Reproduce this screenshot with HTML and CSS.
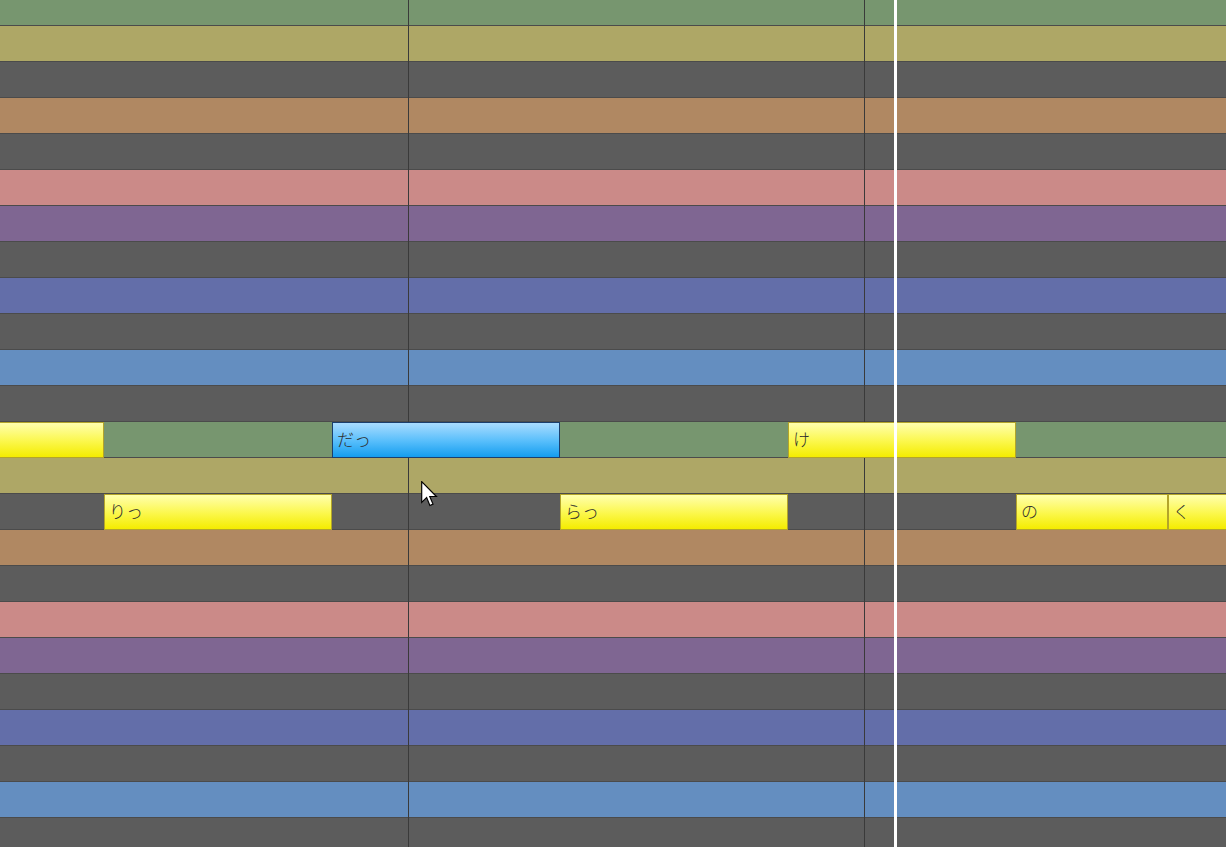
FILE: index.html
```html
<!DOCTYPE html>
<html lang="ja">
<head>
<meta charset="utf-8">
<title>Piano roll</title>
<link rel="stylesheet" href="styles.css">
</head>
<body>
<div class="roll">
  <div class="rows">
    <div class="row c-green"></div>
    <div class="row c-olive"></div>
    <div class="row c-gray"></div>
    <div class="row c-brown"></div>
    <div class="row c-gray"></div>
    <div class="row c-pink"></div>
    <div class="row c-purple"></div>
    <div class="row c-gray"></div>
    <div class="row c-blue"></div>
    <div class="row c-gray"></div>
    <div class="row c-sky"></div>
    <div class="row c-gray"></div>
    <div class="row c-green"></div>
    <div class="row c-olive"></div>
    <div class="row c-gray"></div>
    <div class="row c-brown"></div>
    <div class="row c-gray"></div>
    <div class="row c-pink"></div>
    <div class="row c-purple"></div>
    <div class="row c-gray"></div>
    <div class="row c-blue"></div>
    <div class="row c-gray"></div>
    <div class="row c-sky"></div>
    <div class="row c-gray"></div>
  </div>

  <div class="vline" style="left:408px"></div>
  <div class="vline" style="left:864px"></div>

  <div class="note" style="left:-124px; top:422px; width:228px"></div>
  <div class="note" style="left:104px; top:494px; width:228px">りっ</div>
  <div class="note selected" style="left:332px; top:422px; width:228px">だっ</div>
  <div class="note" style="left:560px; top:494px; width:228px">らっ</div>
  <div class="note" style="left:788px; top:422px; width:228px">け</div>
  <div class="note" style="left:1016px; top:494px; width:152px">の</div>
  <div class="note" style="left:1168px; top:494px; width:152px">く</div>

  <div class="playhead" style="left:894px"></div>

  <svg class="cursor" width="17" height="26" viewBox="0 0 13 20" aria-hidden="true">
    <path d="M0.5 0.5 L0.5 16.5 L4.3 12.8 L6.8 18.8 L9.2 17.8 L6.7 11.9 L11.8 11.9 Z" fill="#fff" stroke="#000" stroke-width="0.9" stroke-linejoin="miter"/>
  </svg>
</div>
</body>
</html>
```
FILE: styles.css
```css
html, body {
  margin: 0;
  padding: 0;
  background: #5c5c5c;
}

.roll {
  position: relative;
  width: 1226px;
  height: 847px;
  overflow: hidden;
  font-family: "Noto Sans CJK JP", "Noto Sans", sans-serif;
}

.rows {
  display: flex;
  flex-direction: column;
  margin-top: -10px;
}

.row {
  height: 35px;
  flex: 0 0 35px;
  border-bottom: 1px solid #4b4b4b;
}

.c-green  { background: #77966f; }
.c-olive  { background: #aea766; }
.c-gray   { background: #5c5c5c; }
.c-brown  { background: #b08862; }
.c-pink   { background: #cb8a88; }
.c-purple { background: #7f6692; }
.c-blue   { background: #636ea9; }
.c-sky    { background: #648ec0; }

.vline {
  position: absolute;
  top: 0;
  bottom: 0;
  width: 1px;
  background: #3a3a3a;
}

.note {
  position: absolute;
  box-sizing: border-box;
  height: 36px;
  padding: 0 0 3px 4px;
  display: flex;
  align-items: center;
  font-size: 17px;
  font-weight: 300;
  color: #2e2e2e;
  border: 1px solid #b3a42a;
  background: linear-gradient(to bottom, #ffffae 0%, #fbf74a 55%, #f4ec00 100%);
}

.note.selected {
  border-color: #1b3f6e;
  background: linear-gradient(to bottom, #a9dcff 0%, #55bdfb 55%, #149def 100%);
}

.playhead {
  position: absolute;
  top: 0;
  bottom: 0;
  width: 3px;
  background: #ffffff;
}

.cursor {
  position: absolute;
  left: 421px;
  top: 481px;
}
```
